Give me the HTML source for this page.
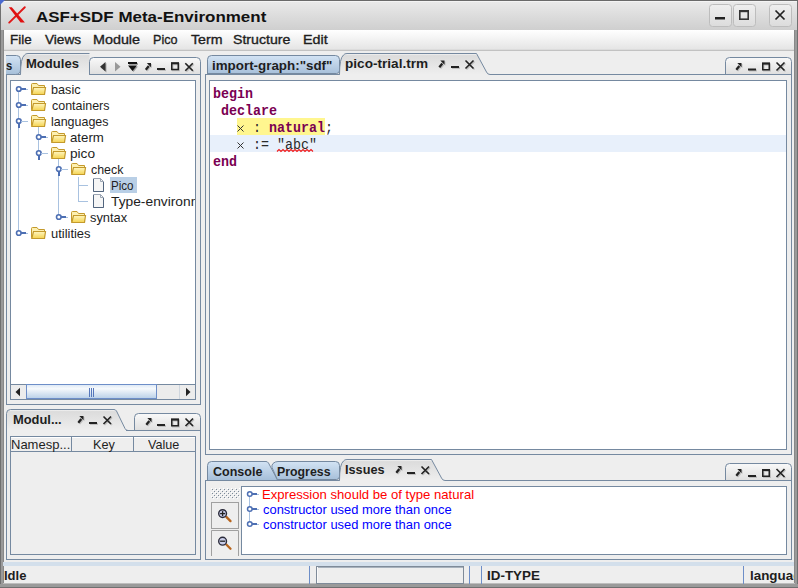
<!DOCTYPE html>
<html><head><meta charset="utf-8">
<style>
*{margin:0;padding:0;box-sizing:border-box}
html,body{width:798px;height:588px;overflow:hidden;background:#eeeeee;font-family:"Liberation Sans",sans-serif;font-size:12px;color:#222;position:relative}
.a{position:absolute}
.t{position:absolute;white-space:nowrap;line-height:1;transform-origin:0 0}
svg{position:absolute;left:0;top:0}
</style></head><body>
<svg width="798" height="588" viewBox="0 0 798 588"><defs>
<linearGradient id="gTitle" x1="0" y1="0" x2="0" y2="1"><stop offset="0" stop-color="#ebebeb"/><stop offset="1" stop-color="#cfcfcf"/></linearGradient>
<linearGradient id="gMenu" x1="0" y1="0" x2="0" y2="1"><stop offset="0" stop-color="#ffffff"/><stop offset="1" stop-color="#e4e4e4"/></linearGradient>
<linearGradient id="gBlue" x1="0" y1="0" x2="0" y2="1"><stop offset="0" stop-color="#d3e3f4"/><stop offset="1" stop-color="#a6bfd9"/></linearGradient>
<linearGradient id="gGrey" x1="0" y1="0" x2="0" y2="1"><stop offset="0" stop-color="#fafafa"/><stop offset="0.1" stop-color="#dcdcdc"/><stop offset="1" stop-color="#eeeeee"/></linearGradient>
<linearGradient id="gTool" x1="0" y1="0" x2="0" y2="1"><stop offset="0" stop-color="#f9f9f9"/><stop offset="1" stop-color="#dedede"/></linearGradient>
<linearGradient id="gBtn" x1="0" y1="0" x2="0" y2="1"><stop offset="0" stop-color="#efefef"/><stop offset="1" stop-color="#dcdcdc"/></linearGradient>
<linearGradient id="gThumb" x1="0" y1="0" x2="0" y2="1"><stop offset="0" stop-color="#dce8f5"/><stop offset="0.3" stop-color="#f6f9fc"/><stop offset="1" stop-color="#b9d0e8"/></linearGradient>
<linearGradient id="gFold" x1="0" y1="0" x2="0" y2="1"><stop offset="0" stop-color="#fff6c0"/><stop offset="1" stop-color="#f4d350"/></linearGradient>
<pattern id="pDots" x="211" y="488" width="4" height="4" patternUnits="userSpaceOnUse"><rect width="4" height="4" fill="#eeeeee"/><rect x="0" y="0" width="1" height="1" fill="#ffffff"/><rect x="1" y="1" width="1" height="1" fill="#7d8b9a"/><rect x="2" y="2" width="1" height="1" fill="#ffffff"/><rect x="3" y="3" width="1" height="1" fill="#7d8b9a"/></pattern>
</defs><rect x="0" y="0" width="798" height="30" fill="url(#gTitle)" /><rect x="3" y="30" width="791" height="20" fill="url(#gMenu)" /><rect x="3" y="49" width="791" height="1" fill="#dcdcdc"/><rect x="3" y="50" width="791" height="1" fill="#c2c2c2"/><rect x="1" y="1" width="796" height="1" fill="#f4f4f4"/><rect x="0" y="30" width="3" height="558" fill="#9a9a9a" /><rect x="0" y="0" width="1" height="588" fill="#707070"/><rect x="3" y="30" width="1" height="554" fill="#888"/><rect x="794" y="30" width="4" height="558" fill="#9a9a9a" /><rect x="797" y="0" width="1" height="588" fill="#707070"/><rect x="794" y="30" width="1" height="554" fill="#888"/><rect x="0" y="584" width="798" height="4" fill="#9a9a9a" /><rect x="0" y="587" width="798" height="1" fill="#707070"/><rect x="3" y="583" width="792" height="1" fill="#bdbdbd"/><rect x="0" y="0" width="798" height="1" fill="#6a6a6a"/><path d="M24.8 7.2 L9.2 22.6" stroke="#e01818" stroke-width="1.9" stroke-linecap="round"/><path d="M8.8 7.2 L11.8 7.2 L24.9 22.6 L20.6 22.6 Z" fill="#e01010"/><path d="M0 0 L5 0 L0 5 Z" fill="#4a6ad0"/><rect x="709.5" y="4.5" width="22.0" height="22" rx="3" fill="url(#gBtn)" stroke="#bdbdbd"/><rect x="733.5" y="4.5" width="22.0" height="22" rx="3" fill="url(#gBtn)" stroke="#bdbdbd"/><rect x="769.5" y="4.5" width="22.0" height="22" rx="3" fill="url(#gBtn)" stroke="#bdbdbd"/><rect x="715" y="17" width="10" height="2.5" fill="#222" /><rect x="739.8" y="10.8" width="8.4" height="8.4" fill="none" stroke="#333" stroke-width="1.6"/><rect x="739" y="10" width="10" height="2.2" fill="#333"/><path d="M775.5 10.5 L784.5 19.5 M784.5 10.5 L775.5 19.5" stroke="#222" stroke-width="1.7"/><rect x="6" y="74" width="15" height="1" fill="#7589a0"/><rect x="6" y="74" width="1" height="331" fill="#7589a0"/><rect x="200" y="74" width="1" height="331" fill="#7589a0"/><rect x="6" y="404" width="195" height="1" fill="#7589a0"/><path d="M6 74.5 L15.5 74.5 Q20.5 74.5 20.5 69.5 L20.5 59.5 Q20.5 55.5 16.5 55.5 L6 55.5" fill="url(#gBlue)" stroke="#7589a0"/><path d="M20.5 74.5 Q20.5 58 24.5 55 Q25.5 53.5 28 53.5 L89.5 53.5 L89.5 74.5" fill="url(#gGrey)" stroke="none"/><path d="M20.5 74.5 Q20.5 58 24.5 55 Q25.5 53.5 28 53.5 L89.5 53.5" fill="none" stroke="#7589a0"/><path d="M89.5 74.5 L89.5 61.5 Q89.5 57.5 93.5 57.5 L196.5 57.5 Q200.5 57.5 200.5 61.5 L200.5 74.5 Z" fill="url(#gTool)" stroke="none"/><path d="M89.5 74.5 L89.5 61.5 Q89.5 57.5 93.5 57.5 L196.5 57.5 Q200.5 57.5 200.5 61.5 L200.5 74.5" fill="none" stroke="#7589a0"/><rect x="89" y="74" width="112" height="1" fill="#7589a0"/><g transform="translate(1,1)" opacity="0.35"><path d="M105.5 62 L100 66.8 L105.5 71.5 Z" fill="#333"/></g><path d="M105.5 62 L100 66.8 L105.5 71.5 Z" fill="#333"/><path d="M115 62 L120.5 66.8 L115 71.5 Z" fill="#999"/><g transform="translate(1,1)" opacity="0.35"><rect x="128" y="62" width="9" height="2" fill="#111"/><path d="M128 65.5 L137 65.5 L132.5 71 Z" fill="#111"/></g><rect x="128" y="62" width="9" height="2" fill="#111"/><path d="M128 65.5 L137 65.5 L132.5 71 Z" fill="#111"/><g transform="translate(1,1)" opacity="0.35"><path d="M145.8 69.7 L148.8 66" stroke="#777" stroke-width="2.3"/><path d="M146.8 63 L151.0 63 L151.0 67.2 Z" fill="#777"/></g><path d="M145.8 69.7 L148.8 66" stroke="#222" stroke-width="2.3"/><path d="M146.8 63 L151.0 63 L151.0 67.2 Z" fill="#222"/><g transform="translate(1,1)" opacity="0.35"><rect x="157" y="68" width="8" height="2" fill="#777"/></g><rect x="157" y="68" width="8" height="2" fill="#222"/><g transform="translate(1,1)" opacity="0.35"><path d="M171.75 69.55 L171.75 63.3 L178.25 63.3 L178.25 69.55 Z" fill="none" stroke="#777" stroke-width="1.5"/><rect x="171" y="62.3" width="8" height="2" fill="#777"/></g><path d="M171.75 69.55 L171.75 63.3 L178.25 63.3 L178.25 69.55 Z" fill="none" stroke="#222" stroke-width="1.5"/><rect x="171" y="62.3" width="8" height="2" fill="#222"/><g transform="translate(1,1)" opacity="0.35"><path d="M185.3 63.3 L192.8 70.8 M192.8 63.3 L185.3 70.8" stroke="#777" stroke-width="1.6"/></g><path d="M185.3 63.3 L192.8 70.8 M192.8 63.3 L185.3 70.8" stroke="#222" stroke-width="1.6"/><rect x="10" y="80" width="186" height="320" fill="#ffffff" /><rect x="10.5" y="80.5" width="185" height="319" fill="none" stroke="#7589a0" stroke-width="1"/><rect x="11" y="384" width="184" height="1" fill="#7589a0"/><rect x="11" y="385" width="184" height="14" fill="#ececec" /><path d="M20 387.8 L15.5 392 L20 396.2 Z" fill="#222"/><path d="M186 387.8 L190.5 392 L186 396.2 Z" fill="#222"/><rect x="26" y="385" width="1" height="14" fill="#cfd6de"/><rect x="179" y="385" width="1" height="14" fill="#cfd6de"/><rect x="26.5" y="384.5" width="130" height="14" fill="url(#gThumb)" stroke="#6d8ec8"/><rect x="89" y="388" width="1" height="9" fill="#5577bb"/><rect x="91" y="388" width="1" height="9" fill="#5577bb"/><rect x="93" y="388" width="1" height="9" fill="#5577bb"/><path d="M6.5 430.5 L6.5 413.5 Q6.5 409.5 10.5 409.5 L114 409.5 Q115.5 409.5 116.5 411 L125 428.5 Q126 430.5 128 430.5" fill="url(#gGrey)" stroke="#7589a0"/><path d="M134.5 430.5 L134.5 417.5 Q134.5 413.5 138.5 413.5 L196.5 413.5 Q200.5 413.5 200.5 417.5 L200.5 430.5 Z" fill="url(#gTool)" stroke="none"/><path d="M134.5 430.5 L134.5 417.5 Q134.5 413.5 138.5 413.5 L196.5 413.5 Q200.5 413.5 200.5 417.5 L200.5 430.5" fill="none" stroke="#7589a0"/><rect x="126" y="430" width="75" height="1" fill="#7589a0"/><rect x="6" y="430" width="1" height="130" fill="#7589a0"/><rect x="200" y="430" width="1" height="130" fill="#7589a0"/><rect x="6" y="559" width="195" height="1" fill="#7589a0"/><g transform="translate(1,1)" opacity="0.35"><path d="M146.3 424.7 L149.3 421" stroke="#777" stroke-width="2.3"/><path d="M147.3 418 L151.5 418 L151.5 422.2 Z" fill="#777"/></g><path d="M146.3 424.7 L149.3 421" stroke="#222" stroke-width="2.3"/><path d="M147.3 418 L151.5 418 L151.5 422.2 Z" fill="#222"/><g transform="translate(1,1)" opacity="0.35"><rect x="157" y="424" width="8" height="2" fill="#777"/></g><rect x="157" y="424" width="8" height="2" fill="#222"/><g transform="translate(1,1)" opacity="0.35"><path d="M171.75 425.75 L171.75 419.5 L178.25 419.5 L178.25 425.75 Z" fill="none" stroke="#777" stroke-width="1.5"/><rect x="171" y="418.5" width="8" height="2" fill="#777"/></g><path d="M171.75 425.75 L171.75 419.5 L178.25 419.5 L178.25 425.75 Z" fill="none" stroke="#222" stroke-width="1.5"/><rect x="171" y="418.5" width="8" height="2" fill="#222"/><g transform="translate(1,1)" opacity="0.35"><path d="M185.5 418.5 L193.0 426.0 M193.0 418.5 L185.5 426.0" stroke="#777" stroke-width="1.6"/></g><path d="M185.5 418.5 L193.0 426.0 M193.0 418.5 L185.5 426.0" stroke="#222" stroke-width="1.6"/><g transform="translate(1,1)" opacity="0.35"><path d="M78.3 422.7 L81.3 419" stroke="#777" stroke-width="2.3"/><path d="M79.3 416 L83.5 416 L83.5 420.2 Z" fill="#777"/></g><path d="M78.3 422.7 L81.3 419" stroke="#222" stroke-width="2.3"/><path d="M79.3 416 L83.5 416 L83.5 420.2 Z" fill="#222"/><g transform="translate(1,1)" opacity="0.35"><rect x="89" y="422" width="8" height="2" fill="#777"/></g><rect x="89" y="422" width="8" height="2" fill="#222"/><g transform="translate(1,1)" opacity="0.35"><path d="M103.5 416.5 L111.0 424.0 M111.0 416.5 L103.5 424.0" stroke="#777" stroke-width="1.6"/></g><path d="M103.5 416.5 L111.0 424.0 M111.0 416.5 L103.5 424.0" stroke="#222" stroke-width="1.6"/><rect x="10.5" y="436.5" width="185" height="118" fill="none" stroke="#7589a0" stroke-width="1"/><rect x="11" y="451" width="184" height="1" fill="#7589a0"/><rect x="71" y="437" width="1" height="14" fill="#7589a0"/><rect x="133" y="437" width="1" height="14" fill="#7589a0"/><rect x="11" y="437" width="60" height="1" fill="#ffffff"/><rect x="72" y="437" width="61" height="1" fill="#ffffff"/><rect x="134" y="437" width="61" height="1" fill="#ffffff"/><rect x="205" y="74" width="135" height="1" fill="#7589a0"/><rect x="205" y="74" width="1" height="381" fill="#7589a0"/><rect x="791" y="74" width="1" height="381" fill="#7589a0"/><rect x="205" y="454" width="587" height="1" fill="#7589a0"/><path d="M207.5 74 L207.5 59.5 Q207.5 55.5 211.5 55.5 L335.5 55.5 Q339.5 55.5 339.5 59.5 L339.5 70.5 Q339.5 73.5 336.5 73.5 L207.5 73.5" fill="url(#gBlue)" stroke="#7589a0"/><path d="M339.5 74.5 Q339.5 58 343.5 55 Q344.5 53.5 347 53.5 L476.5 53.5 L486.5 72 Q487.5 74.5 490 74.5 Z" fill="url(#gGrey)" stroke="none"/><path d="M339.5 74.5 Q339.5 58 343.5 55 Q344.5 53.5 347 53.5 L476.5 53.5 L486.5 72 Q487.5 74.5 490 74.5" fill="none" stroke="#7589a0"/><g transform="translate(1,1)" opacity="0.35"><path d="M439.3 67.2 L442.3 63.5" stroke="#777" stroke-width="2.3"/><path d="M440.3 60.5 L444.5 60.5 L444.5 64.7 Z" fill="#777"/></g><path d="M439.3 67.2 L442.3 63.5" stroke="#222" stroke-width="2.3"/><path d="M440.3 60.5 L444.5 60.5 L444.5 64.7 Z" fill="#222"/><g transform="translate(1,1)" opacity="0.35"><rect x="451" y="66" width="8" height="2" fill="#777"/></g><rect x="451" y="66" width="8" height="2" fill="#222"/><g transform="translate(1,1)" opacity="0.35"><path d="M465.5 60.5 L473.5 68.5 M473.5 60.5 L465.5 68.5" stroke="#777" stroke-width="1.6"/></g><path d="M465.5 60.5 L473.5 68.5 M473.5 60.5 L465.5 68.5" stroke="#222" stroke-width="1.6"/><path d="M725.5 74.5 L725.5 61.5 Q725.5 57.5 729.5 57.5 L787.5 57.5 Q791.5 57.5 791.5 61.5 L791.5 74.5 Z" fill="url(#gTool)" stroke="none"/><path d="M725.5 74.5 L725.5 61.5 Q725.5 57.5 729.5 57.5 L787.5 57.5 Q791.5 57.5 791.5 61.5 L791.5 74.5" fill="none" stroke="#7589a0"/><rect x="490" y="74" width="302" height="1" fill="#7589a0"/><g transform="translate(1,1)" opacity="0.35"><path d="M736.3 69.7 L739.3 66" stroke="#777" stroke-width="2.3"/><path d="M737.3 63 L741.5 63 L741.5 67.2 Z" fill="#777"/></g><path d="M736.3 69.7 L739.3 66" stroke="#222" stroke-width="2.3"/><path d="M737.3 63 L741.5 63 L741.5 67.2 Z" fill="#222"/><g transform="translate(1,1)" opacity="0.35"><rect x="748" y="68.5" width="8" height="2" fill="#777"/></g><rect x="748" y="68.5" width="8" height="2" fill="#222"/><g transform="translate(1,1)" opacity="0.35"><path d="M762.75 69.75 L762.75 63.5 L769.25 63.5 L769.25 69.75 Z" fill="none" stroke="#777" stroke-width="1.5"/><rect x="762" y="62.5" width="8" height="2" fill="#777"/></g><path d="M762.75 69.75 L762.75 63.5 L769.25 63.5 L769.25 69.75 Z" fill="none" stroke="#222" stroke-width="1.5"/><rect x="762" y="62.5" width="8" height="2" fill="#222"/><g transform="translate(1,1)" opacity="0.35"><path d="M776.5 62.5 L784.5 70.5 M784.5 62.5 L776.5 70.5" stroke="#777" stroke-width="1.6"/></g><path d="M776.5 62.5 L784.5 70.5 M784.5 62.5 L776.5 70.5" stroke="#222" stroke-width="1.6"/><rect x="209" y="80" width="578" height="370" fill="#ffffff" /><rect x="209.5" y="80.5" width="577" height="369" fill="none" stroke="#7589a0" stroke-width="1"/><rect x="210" y="135" width="576" height="17" fill="#e8f0fb" /><rect x="237" y="118" width="88" height="17" fill="#fff68f" /><rect x="205" y="480" width="135" height="1" fill="#7589a0"/><rect x="205" y="480" width="1" height="80" fill="#7589a0"/><rect x="791" y="480" width="1" height="80" fill="#7589a0"/><rect x="205" y="559" width="587" height="1" fill="#7589a0"/><path d="M207.5 480 L207.5 465.5 Q207.5 461.5 211.5 461.5 L266 461.5 Q267.5 461.5 268.5 463 L277.5 480" fill="url(#gBlue)" stroke="#7589a0"/><path d="M277.5 480 L272 467.5 Q271.5 465 273 463.5 Q275 461.5 278 461.5 L335.5 461.5 Q339.5 461.5 339.5 465.5 L339.5 476.5 Q339.5 479.5 336.5 479.5 L277.5 479.5" fill="url(#gBlue)" stroke="#7589a0"/><path d="M339.5 480.5 Q339.5 464 343.5 461 Q344.5 459.5 347 459.5 L431.5 459.5 L441.5 478 Q442.5 480.5 445 480.5 Z" fill="url(#gGrey)" stroke="none"/><path d="M339.5 480.5 Q339.5 464 343.5 461 Q344.5 459.5 347 459.5 L431.5 459.5 L441.5 478 Q442.5 480.5 445 480.5" fill="none" stroke="#7589a0"/><g transform="translate(1,1)" opacity="0.35"><path d="M396.3 472.7 L399.3 469" stroke="#777" stroke-width="2.3"/><path d="M397.3 466 L401.5 466 L401.5 470.2 Z" fill="#777"/></g><path d="M396.3 472.7 L399.3 469" stroke="#222" stroke-width="2.3"/><path d="M397.3 466 L401.5 466 L401.5 470.2 Z" fill="#222"/><g transform="translate(1,1)" opacity="0.35"><rect x="407" y="472" width="8" height="2" fill="#777"/></g><rect x="407" y="472" width="8" height="2" fill="#222"/><g transform="translate(1,1)" opacity="0.35"><path d="M421.5 466.5 L429.0 474.0 M429.0 466.5 L421.5 474.0" stroke="#777" stroke-width="1.6"/></g><path d="M421.5 466.5 L429.0 474.0 M429.0 466.5 L421.5 474.0" stroke="#222" stroke-width="1.6"/><path d="M725.5 480.5 L725.5 467.5 Q725.5 463.5 729.5 463.5 L787.5 463.5 Q791.5 463.5 791.5 467.5 L791.5 480.5 Z" fill="url(#gTool)" stroke="none"/><path d="M725.5 480.5 L725.5 467.5 Q725.5 463.5 729.5 463.5 L787.5 463.5 Q791.5 463.5 791.5 467.5 L791.5 480.5" fill="none" stroke="#7589a0"/><rect x="445" y="480" width="347" height="1" fill="#7589a0"/><g transform="translate(1,1)" opacity="0.35"><path d="M736.3 475.7 L739.3 472" stroke="#777" stroke-width="2.3"/><path d="M737.3 469 L741.5 469 L741.5 473.2 Z" fill="#777"/></g><path d="M736.3 475.7 L739.3 472" stroke="#222" stroke-width="2.3"/><path d="M737.3 469 L741.5 469 L741.5 473.2 Z" fill="#222"/><g transform="translate(1,1)" opacity="0.35"><rect x="748" y="475" width="8" height="2" fill="#777"/></g><rect x="748" y="475" width="8" height="2" fill="#222"/><g transform="translate(1,1)" opacity="0.35"><path d="M762.75 476.25 L762.75 470 L769.25 470 L769.25 476.25 Z" fill="none" stroke="#777" stroke-width="1.5"/><rect x="762" y="469" width="8" height="2" fill="#777"/></g><path d="M762.75 476.25 L762.75 470 L769.25 470 L769.25 476.25 Z" fill="none" stroke="#222" stroke-width="1.5"/><rect x="762" y="469" width="8" height="2" fill="#222"/><g transform="translate(1,1)" opacity="0.35"><path d="M776.5 469 L784.5 477 M784.5 469 L776.5 477" stroke="#777" stroke-width="1.6"/></g><path d="M776.5 469 L784.5 477 M784.5 469 L776.5 477" stroke="#222" stroke-width="1.6"/><rect x="211" y="488" width="29" height="11" fill="url(#pDots)" /><rect x="211.5" y="502.5" width="27" height="26" fill="none" stroke="#a0a0a0" stroke-width="1"/><path d="M211.5 556 L211.5 530.5 L238.5 530.5 L238.5 556" fill="none" stroke="#a0a0a0"/><path d="M226.3 516.9 L230.5 521.1" stroke="#b8651e" stroke-width="2.3" stroke-linecap="round"/><circle cx="222.6" cy="513.6" r="3.9" fill="#c9cde8" stroke="#2a2a3a" stroke-width="1.4"/><path d="M220.1 513.6 L225.1 513.6" stroke="#222" stroke-width="1.3"/><path d="M222.6 511.1 L222.6 516.1" stroke="#222" stroke-width="1.3"/><path d="M226.3 544.5 L230.5 548.7" stroke="#b8651e" stroke-width="2.3" stroke-linecap="round"/><circle cx="222.6" cy="541.2" r="3.9" fill="#c9cde8" stroke="#2a2a3a" stroke-width="1.4"/><path d="M220.1 541.2 L225.1 541.2" stroke="#222" stroke-width="1.3"/><rect x="241" y="486" width="546" height="69" fill="#ffffff" /><rect x="241.5" y="486.5" width="545" height="68" fill="none" stroke="#7589a0" stroke-width="1"/><rect x="249" y="494" width="1" height="30" fill="#a9c2e0"/><circle cx="249.8" cy="494" r="2.3" fill="#fff" stroke="#4d6fb3" stroke-width="1.5"/><rect x="252" y="493" width="5" height="2" fill="#4d6fb3" /><rect x="257" y="494" width="2" height="1" fill="#a9c2e0" /><circle cx="249.8" cy="509" r="2.3" fill="#fff" stroke="#4d6fb3" stroke-width="1.5"/><rect x="252" y="508" width="5" height="2" fill="#4d6fb3" /><rect x="257" y="509" width="2" height="1" fill="#a9c2e0" /><circle cx="249.8" cy="524" r="2.3" fill="#fff" stroke="#4d6fb3" stroke-width="1.5"/><rect x="252" y="523" width="5" height="2" fill="#4d6fb3" /><rect x="257" y="524" width="2" height="1" fill="#a9c2e0" /><rect x="3" y="562" width="791" height="4" fill="#d3dfeb" /><rect x="309" y="566" width="1" height="18" fill="#6d8ec8"/><rect x="316.5" y="566.5" width="147" height="17" fill="#eeeeee" stroke="#7f8b99"/><rect x="317" y="567" width="146" height="1" fill="#a8b2bd"/><rect x="317" y="567" width="1" height="16" fill="#fafafa"/><rect x="469" y="566" width="1" height="18" fill="#6d8ec8"/><rect x="481" y="566" width="1" height="18" fill="#6d8ec8"/><rect x="743" y="566" width="1" height="18" fill="#6d8ec8"/><rect x="18" y="89" width="1" height="144" fill="#a9c2e0"/><rect x="38" y="121" width="1" height="32" fill="#a9c2e0"/><rect x="58" y="153" width="1" height="64" fill="#a9c2e0"/><rect x="78" y="177" width="1" height="25" fill="#a9c2e0"/><circle cx="18.8" cy="89" r="2.3" fill="#fff" stroke="#4d6fb3" stroke-width="1.6"/><rect x="21" y="88" width="5" height="2" fill="#4d6fb3" /><rect x="26" y="89" width="2" height="1" fill="#a9c2e0" /><path d="M31.5 93.5 L31.5 84.5 Q31.5 83.5 32.5 83.5 L37 83.5 L38.5 85.5 L44.5 85.5 L44.5 93.5 Z" fill="#fdf0b0" stroke="#c49a2c" stroke-width="1"/><path d="M31.8 94.5 L33.5 87.5 L45.5 87.5 L44.5 94.5 Z" fill="url(#gFold)" stroke="#c49a2c" stroke-width="1.2"/><circle cx="18.8" cy="105" r="2.3" fill="#fff" stroke="#4d6fb3" stroke-width="1.6"/><rect x="21" y="104" width="5" height="2" fill="#4d6fb3" /><rect x="26" y="105" width="2" height="1" fill="#a9c2e0" /><path d="M31.5 109.5 L31.5 100.5 Q31.5 99.5 32.5 99.5 L37 99.5 L38.5 101.5 L44.5 101.5 L44.5 109.5 Z" fill="#fdf0b0" stroke="#c49a2c" stroke-width="1"/><path d="M31.8 110.5 L33.5 103.5 L45.5 103.5 L44.5 110.5 Z" fill="url(#gFold)" stroke="#c49a2c" stroke-width="1.2"/><circle cx="18.8" cy="121" r="2.3" fill="#fff" stroke="#4d6fb3" stroke-width="1.6"/><rect x="18" y="123" width="2" height="5" fill="#4d6fb3" /><rect x="21" y="121" width="7" height="1" fill="#a9c2e0" /><path d="M31.5 125.5 L31.5 116.5 Q31.5 115.5 32.5 115.5 L37 115.5 L38.5 117.5 L44.5 117.5 L44.5 125.5 Z" fill="#fdf0b0" stroke="#c49a2c" stroke-width="1"/><path d="M31.8 126.5 L33.5 119.5 L45.5 119.5 L44.5 126.5 Z" fill="url(#gFold)" stroke="#c49a2c" stroke-width="1.2"/><circle cx="38.8" cy="137" r="2.3" fill="#fff" stroke="#4d6fb3" stroke-width="1.6"/><rect x="41" y="136" width="5" height="2" fill="#4d6fb3" /><rect x="46" y="137" width="2" height="1" fill="#a9c2e0" /><path d="M51.5 141.5 L51.5 132.5 Q51.5 131.5 52.5 131.5 L57 131.5 L58.5 133.5 L64.5 133.5 L64.5 141.5 Z" fill="#fdf0b0" stroke="#c49a2c" stroke-width="1"/><path d="M51.8 142.5 L53.5 135.5 L65.5 135.5 L64.5 142.5 Z" fill="url(#gFold)" stroke="#c49a2c" stroke-width="1.2"/><circle cx="38.8" cy="153" r="2.3" fill="#fff" stroke="#4d6fb3" stroke-width="1.6"/><rect x="38" y="155" width="2" height="5" fill="#4d6fb3" /><rect x="41" y="153" width="7" height="1" fill="#a9c2e0" /><path d="M51.5 157.5 L51.5 148.5 Q51.5 147.5 52.5 147.5 L57 147.5 L58.5 149.5 L64.5 149.5 L64.5 157.5 Z" fill="#fdf0b0" stroke="#c49a2c" stroke-width="1"/><path d="M51.8 158.5 L53.5 151.5 L65.5 151.5 L64.5 158.5 Z" fill="url(#gFold)" stroke="#c49a2c" stroke-width="1.2"/><circle cx="58.8" cy="169" r="2.3" fill="#fff" stroke="#4d6fb3" stroke-width="1.6"/><rect x="58" y="171" width="2" height="5" fill="#4d6fb3" /><rect x="61" y="169" width="7" height="1" fill="#a9c2e0" /><path d="M71.5 173.5 L71.5 164.5 Q71.5 163.5 72.5 163.5 L77 163.5 L78.5 165.5 L84.5 165.5 L84.5 173.5 Z" fill="#fdf0b0" stroke="#c49a2c" stroke-width="1"/><path d="M71.8 174.5 L73.5 167.5 L85.5 167.5 L84.5 174.5 Z" fill="url(#gFold)" stroke="#c49a2c" stroke-width="1.2"/><rect x="78" y="185" width="10" height="1" fill="#a9c2e0" /><path d="M93.5 178.5 L100.5 178.5 L103.5 181.5 L103.5 191.5 L93.5 191.5 Z" fill="#f6f6f6" stroke="#9aa4b2"/><path d="M93.5 179 L93.5 191.5 L103.5 191.5 L103.5 182" fill="none" stroke="#52657e" stroke-width="1"/><path d="M100.5 178.5 L100.5 181.5 L103.5 181.5" fill="none" stroke="#9aa4b2"/><rect x="78" y="201" width="10" height="1" fill="#a9c2e0" /><path d="M93.5 194.5 L100.5 194.5 L103.5 197.5 L103.5 207.5 L93.5 207.5 Z" fill="#f6f6f6" stroke="#9aa4b2"/><path d="M93.5 195 L93.5 207.5 L103.5 207.5 L103.5 198" fill="none" stroke="#52657e" stroke-width="1"/><path d="M100.5 194.5 L100.5 197.5 L103.5 197.5" fill="none" stroke="#9aa4b2"/><circle cx="58.8" cy="217" r="2.3" fill="#fff" stroke="#4d6fb3" stroke-width="1.6"/><rect x="61" y="216" width="5" height="2" fill="#4d6fb3" /><rect x="66" y="217" width="2" height="1" fill="#a9c2e0" /><path d="M71.5 221.5 L71.5 212.5 Q71.5 211.5 72.5 211.5 L77 211.5 L78.5 213.5 L84.5 213.5 L84.5 221.5 Z" fill="#fdf0b0" stroke="#c49a2c" stroke-width="1"/><path d="M71.8 222.5 L73.5 215.5 L85.5 215.5 L84.5 222.5 Z" fill="url(#gFold)" stroke="#c49a2c" stroke-width="1.2"/><circle cx="18.8" cy="233" r="2.3" fill="#fff" stroke="#4d6fb3" stroke-width="1.6"/><rect x="21" y="232" width="5" height="2" fill="#4d6fb3" /><rect x="26" y="233" width="2" height="1" fill="#a9c2e0" /><path d="M31.5 237.5 L31.5 228.5 Q31.5 227.5 32.5 227.5 L37 227.5 L38.5 229.5 L44.5 229.5 L44.5 237.5 Z" fill="#fdf0b0" stroke="#c49a2c" stroke-width="1"/><path d="M31.8 238.5 L33.5 231.5 L45.5 231.5 L44.5 238.5 Z" fill="url(#gFold)" stroke="#c49a2c" stroke-width="1.2"/><rect x="110" y="177" width="27" height="16" fill="#b9cfe6" /></svg>
<div class="t" style="left:213px;top:87px;font-family:'Liberation Mono',monospace;font-size:14px;white-space:pre;transform:scaleX(0.9524);"><span style="font-weight:bold;color:#7a0052">begin</span></div>
<div class="t" style="left:213px;top:104px;font-family:'Liberation Mono',monospace;font-size:14px;white-space:pre;transform:scaleX(0.9524);"> <span style="font-weight:bold;color:#7a0052">declare</span></div>
<div class="t" style="left:213px;top:121px;font-family:'Liberation Mono',monospace;font-size:14px;white-space:pre;transform:scaleX(0.9524);">   <span style="color:#2a2a2a">  : </span><span style="font-weight:bold;color:#7a0052">natural</span><span style="color:#2a2a2a">;</span></div>
<div class="t" style="left:213px;top:138px;font-family:'Liberation Mono',monospace;font-size:14px;white-space:pre;transform:scaleX(0.9524);">   <span style="color:#2a2a2a">  := "abc"</span></div>
<div class="t" style="left:213px;top:155px;font-family:'Liberation Mono',monospace;font-size:14px;white-space:pre;transform:scaleX(0.9524);"><span style="font-weight:bold;color:#7a0052">end</span></div>
<svg width="798" height="588" viewBox="0 0 798 588"><path d="M277 151.5 l2 -2 l2 2 l2 -2 l2 2 l2 -2 l2 2 l2 -2 l2 2 l2 -2 l2 2 l2 -2 l2 2 l2 -2 l2 2 l2 -2 l2 2 l2 -2 l2 2" fill="none" stroke="#f01818" stroke-width="1.1"/><path d="M237.5 125.5 L243.5 131.5 M243.5 125.5 L237.5 131.5 M237.5 142.5 L243.5 148.5 M243.5 142.5 L237.5 148.5" stroke="#333" stroke-width="1"/></svg>
<div class="t" style="left:35.70px;top:10.00px;font-family:'Liberation Sans',sans-serif;font-size:14.5px;font-weight:bold;color:#111;transform:scaleX(1.1690);">ASF+SDF Meta-Environment</div>
<div class="t" style="left:9.67px;top:33.00px;font-family:'Liberation Sans',sans-serif;font-size:13px;color:#1e1e1e;transform:scaleX(1.0300);-webkit-text-stroke:0.35px #1e1e1e;">File</div>
<div class="t" style="left:45.40px;top:33.00px;font-family:'Liberation Sans',sans-serif;font-size:13px;color:#1e1e1e;transform:scaleX(1.0471);-webkit-text-stroke:0.35px #1e1e1e;">Views</div>
<div class="t" style="left:93.40px;top:33.00px;font-family:'Liberation Sans',sans-serif;font-size:13px;color:#1e1e1e;transform:scaleX(1.1024);-webkit-text-stroke:0.35px #1e1e1e;">Module</div>
<div class="t" style="left:152.63px;top:33.00px;font-family:'Liberation Sans',sans-serif;font-size:13px;color:#1e1e1e;transform:scaleX(0.9708);-webkit-text-stroke:0.35px #1e1e1e;">Pico</div>
<div class="t" style="left:190.50px;top:33.00px;font-family:'Liberation Sans',sans-serif;font-size:13px;color:#1e1e1e;transform:scaleX(1.0893);-webkit-text-stroke:0.35px #1e1e1e;">Term</div>
<div class="t" style="left:233.41px;top:33.00px;font-family:'Liberation Sans',sans-serif;font-size:13px;color:#1e1e1e;transform:scaleX(1.0882);-webkit-text-stroke:0.35px #1e1e1e;">Structure</div>
<div class="t" style="left:303.20px;top:33.00px;font-family:'Liberation Sans',sans-serif;font-size:13px;color:#1e1e1e;transform:scaleX(1.1000);-webkit-text-stroke:0.35px #1e1e1e;">Edit</div>
<div class="t" style="left:5.53px;top:59.00px;font-family:'Liberation Sans',sans-serif;font-size:13px;font-weight:bold;color:#1e1e1e;transform:scaleX(0.8667);">s</div>
<div class="t" style="left:25.80px;top:57.00px;font-family:'Liberation Sans',sans-serif;font-size:13px;font-weight:bold;color:#1e1e1e;transform:scaleX(1.0039);">Modules</div>
<div class="t" style="left:211.77px;top:59.00px;font-family:'Liberation Sans',sans-serif;font-size:13px;font-weight:bold;color:#1e1e1e;transform:scaleX(1.0287);">import-graph:"sdf"</div>
<div class="t" style="left:345.15px;top:57.00px;font-family:'Liberation Sans',sans-serif;font-size:13px;font-weight:bold;color:#1e1e1e;transform:scaleX(1.0462);">pico-trial.trm</div>
<div class="t" style="left:12.81px;top:413.00px;font-family:'Liberation Sans',sans-serif;font-size:13px;font-weight:bold;color:#1e1e1e;transform:scaleX(0.9915);">Modul...</div>
<div class="t" style="left:213.00px;top:465.00px;font-family:'Liberation Sans',sans-serif;font-size:13px;font-weight:bold;color:#1e1e1e;transform:scaleX(0.9627);">Console</div>
<div class="t" style="left:277.05px;top:465.00px;font-family:'Liberation Sans',sans-serif;font-size:13px;font-weight:bold;color:#1e1e1e;transform:scaleX(0.9491);">Progress</div>
<div class="t" style="left:344.92px;top:463.00px;font-family:'Liberation Sans',sans-serif;font-size:13px;font-weight:bold;color:#1e1e1e;transform:scaleX(0.9769);">Issues</div>
<div class="t" style="left:50.93px;top:83.00px;font-family:'Liberation Sans',sans-serif;font-size:13px;color:#1e1e1e;transform:scaleX(0.9724);">basic</div>
<div class="t" style="left:51.90px;top:99.00px;font-family:'Liberation Sans',sans-serif;font-size:13px;color:#1e1e1e;transform:scaleX(0.9583);">containers</div>
<div class="t" style="left:50.94px;top:115.00px;font-family:'Liberation Sans',sans-serif;font-size:13px;color:#1e1e1e;transform:scaleX(0.9576);">languages</div>
<div class="t" style="left:70.38px;top:131.00px;font-family:'Liberation Sans',sans-serif;font-size:13px;color:#1e1e1e;transform:scaleX(1.0187);">aterm</div>
<div class="t" style="left:70.35px;top:147.00px;font-family:'Liberation Sans',sans-serif;font-size:13px;color:#1e1e1e;transform:scaleX(1.0500);">pico</div>
<div class="t" style="left:91.40px;top:163.00px;font-family:'Liberation Sans',sans-serif;font-size:13px;color:#1e1e1e;transform:scaleX(0.9529);">check</div>
<div class="t" style="left:110.91px;top:179.00px;font-family:'Liberation Sans',sans-serif;font-size:13px;color:#1e1e1e;transform:scaleX(0.8917);">Pico</div>
<div class="t" style="left:90.41px;top:211.00px;font-family:'Liberation Sans',sans-serif;font-size:13px;color:#1e1e1e;transform:scaleX(0.9889);">syntax</div>
<div class="t" style="left:51.01px;top:227.00px;font-family:'Liberation Sans',sans-serif;font-size:13px;color:#1e1e1e;transform:scaleX(0.9947);">utilities</div>
<div class="a" style="left:105px;top:190px;width:90px;height:20px;overflow:hidden"><div class="t" style="left:6.40px;top:5.00px;font-family:'Liberation Sans',sans-serif;font-size:13px;color:#1e1e1e;transform:scaleX(1.0600);">Type-environment</div></div>
<div class="t" style="left:11.00px;top:438.00px;font-family:'Liberation Sans',sans-serif;font-size:13px;color:#1e1e1e;transform:scaleX(1.0000);">Namesp...</div>
<div class="t" style="left:92.52px;top:438.00px;font-family:'Liberation Sans',sans-serif;font-size:13px;color:#1e1e1e;transform:scaleX(0.9773);">Key</div>
<div class="t" style="left:148.20px;top:438.00px;font-family:'Liberation Sans',sans-serif;font-size:13px;color:#1e1e1e;transform:scaleX(0.9688);">Value</div>
<div class="t" style="left:261.59px;top:488.00px;font-family:'Liberation Sans',sans-serif;font-size:13px;color:#ff0000;transform:scaleX(1.0086);">Expression should be of type natural</div>
<div class="t" style="left:262.60px;top:503.00px;font-family:'Liberation Sans',sans-serif;font-size:13px;color:#0000ff;transform:scaleX(0.9926);">constructor used more than once</div>
<div class="t" style="left:262.60px;top:518.00px;font-family:'Liberation Sans',sans-serif;font-size:13px;color:#0000ff;transform:scaleX(0.9926);">constructor used more than once</div>
<div class="t" style="left:4.00px;top:569.00px;font-family:'Liberation Sans',sans-serif;font-size:13px;font-weight:bold;color:#1e1e1e;transform:scaleX(1.0000);">Idle</div>
<div class="t" style="left:487.37px;top:569.00px;font-family:'Liberation Sans',sans-serif;font-size:13px;font-weight:bold;color:#1e1e1e;transform:scaleX(1.0320);">ID-TYPE</div>
<div class="a" style="left:744px;top:560px;width:50px;height:24px;overflow:hidden"><div class="t" style="left:5.97px;top:9.00px;font-family:'Liberation Sans',sans-serif;font-size:13px;font-weight:bold;color:#1e1e1e;transform:scaleX(1.0300);">language</div></div>
</body></html>
